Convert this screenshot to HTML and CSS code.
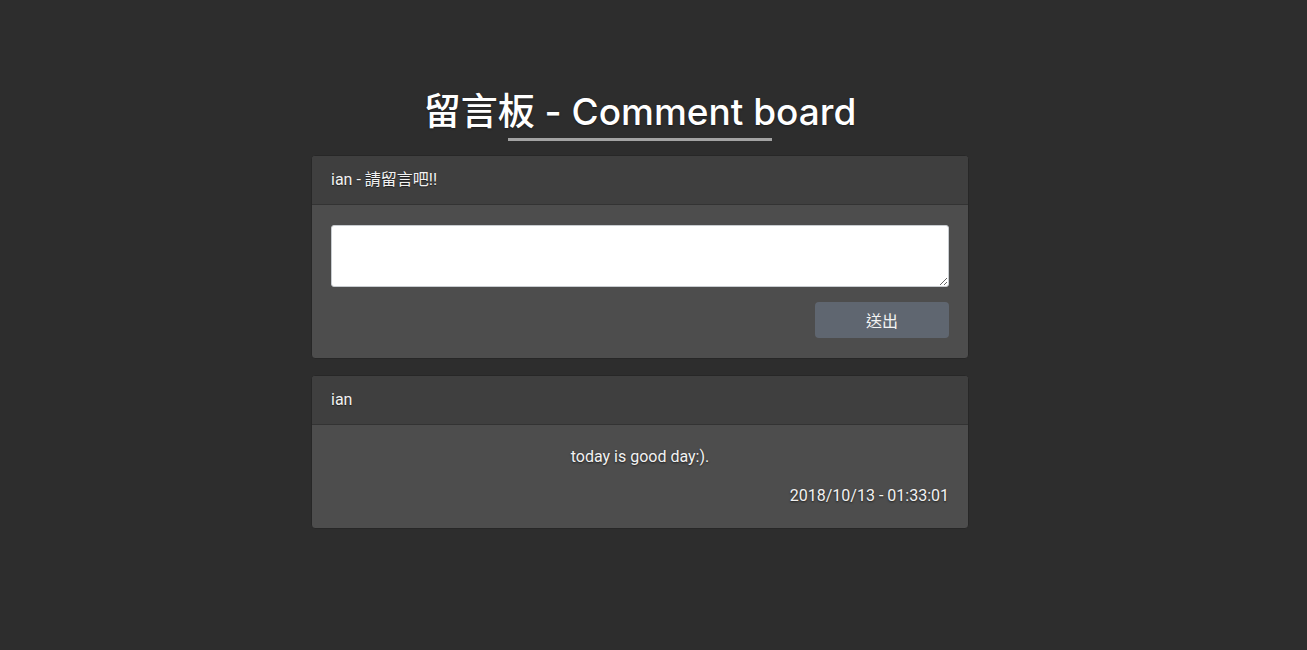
FILE: index.html
```html
<!DOCTYPE html>
<html lang="zh-Hant">
<head>
<meta charset="utf-8">
<title>留言板 - Comment board</title>
<link rel="stylesheet" href="styles.css">
</head>
<body>
<main class="container">
  <h1 class="title">留言板 - Comment board</h1>
  <section class="card">
    <div class="card-header">ian - 請留言吧!!</div>
    <div class="card-body">
      <textarea class="input"></textarea>
      <div class="actions"><button class="btn">送出</button></div>
    </div>
  </section>
  <section class="card">
    <div class="card-header">ian</div>
    <div class="card-body">
      <p class="content">today is good day:).</p>
      <p class="time">2018/10/13 - 01:33:01</p>
    </div>
  </section>
</main>
</body>
</html>
```
FILE: styles.css
```css
* { box-sizing: border-box; }
html, body { margin: 0; padding: 0; }
body {
  background: #2d2d2d;
  color: #f2f2f2;
  font-family: Roboto, "Noto Sans CJK TC", sans-serif;
  font-size: 16px;
  line-height: 1.5;
  width: 1280px;
}
.container {
  width: 658px;
  margin: 0 auto;
  padding-top: 89px;
}
.title {
  margin: 0 0 14px;
  text-align: center;
  font-family: Inter, "Noto Sans CJK TC", sans-serif;
  font-size: 37px;
  font-weight: 500;
  line-height: 46px;
  color: #fff;
  text-shadow: 0 1px 2px rgba(0,0,0,0.4);
}
.title::after {
  content: "";
  display: block;
  width: 40%;
  height: 3px;
  margin: 3px auto 0;
  background: #a3a3a3;
}
.card {
  background: #4d4d4d;
  border: 1px solid #272727;
  border-radius: 4px;
  margin-bottom: 16px;
  overflow: hidden;
}
.card-header {
  background: #3f3f3f;
  border-bottom: 1px solid #333;
  padding: 12px 19px;
  height: 49px;
  text-shadow: 0 1px 1px rgba(0,0,0,0.5);
}
.card-body {
  padding: 20px 19px;
}
.input {
  display: block;
  width: 100%;
  height: 62px;
  border: 1px solid #c8ccd0;
  border-radius: 3px;
  background: #fff;
  margin: 0;
  font-family: inherit;
  font-size: 16px;
}
.actions {
  display: flex;
  justify-content: flex-end;
  margin-top: 15px;
}
.btn {
  width: 134px;
  height: 36px;
  border: 0;
  border-radius: 4px;
  background: #5f6670;
  color: #f3f3f3;
  font-family: inherit;
  font-size: 16px;
}
.content {
  margin: 0 0 15px;
  text-align: center;
  text-shadow: 0 1px 2px rgba(0,0,0,0.6);
}
.time {
  margin: 0;
  text-align: right;
  text-shadow: 0 1px 2px rgba(0,0,0,0.6);
}
```
